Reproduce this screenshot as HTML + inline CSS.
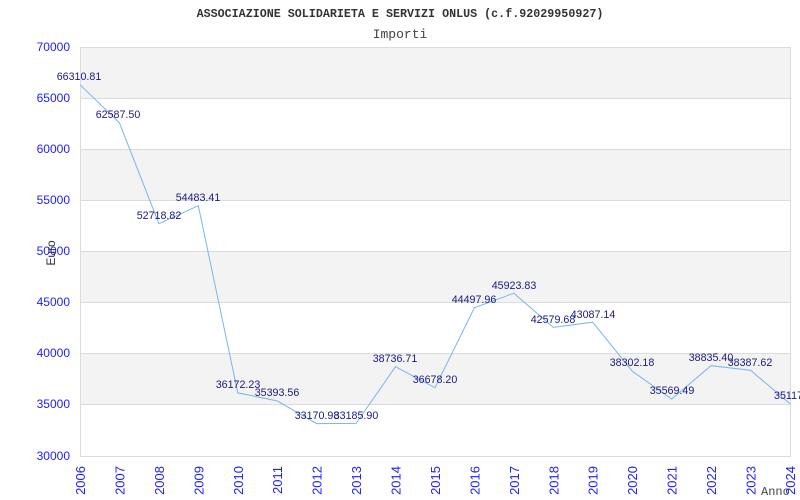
<!DOCTYPE html>
<html><head><meta charset="utf-8"><style>
html,body{margin:0;padding:0;background:#fff;width:800px;height:500px;overflow:hidden}
</style></head><body>
<svg width="800" height="500" xmlns="http://www.w3.org/2000/svg">
<rect x="0" y="0" width="800" height="500" fill="#fff"/>
<g fill="#f3f3f3">
<rect x="80" y="47" width="710" height="51"/>
<rect x="80" y="149" width="710" height="51"/>
<rect x="80" y="251" width="710" height="51"/>
<rect x="80" y="353" width="710" height="51"/>
</g>
<g stroke="#dcdcdc" stroke-width="1">
<line x1="80" y1="47.5" x2="790" y2="47.5"/>
<line x1="80" y1="98.5" x2="790" y2="98.5"/>
<line x1="80" y1="149.5" x2="790" y2="149.5"/>
<line x1="80" y1="200.5" x2="790" y2="200.5"/>
<line x1="80" y1="251.5" x2="790" y2="251.5"/>
<line x1="80" y1="302.5" x2="790" y2="302.5"/>
<line x1="80" y1="353.5" x2="790" y2="353.5"/>
<line x1="80" y1="404.5" x2="790" y2="404.5"/>
<line x1="80" y1="456.5" x2="790" y2="456.5"/>
<line x1="80.5" y1="47" x2="80.5" y2="457"/>
<line x1="790.5" y1="47" x2="790.5" y2="457"/>
</g>
<g font-family="Liberation Mono, monospace" fill="#333" text-anchor="middle">
<text x="400" y="17" font-size="11.7" font-weight="bold">ASSOCIAZIONE SOLIDARIETA E SERVIZI ONLUS (c.f.92029950927)</text>
<text x="400" y="38" font-size="13" fill="#444">Importi</text>
</g>
<g font-family="Liberation Sans, sans-serif" font-size="12" fill="#2020ff" text-anchor="end">
<text x="70" y="51">70000</text><text x="70" y="102">65000</text><text x="70" y="153">60000</text><text x="70" y="204">55000</text><text x="70" y="255">50000</text><text x="70" y="306">45000</text><text x="70" y="357">40000</text><text x="70" y="408">35000</text><text x="70" y="460">30000</text>
</g>
<g font-family="Liberation Sans, sans-serif" font-size="13" fill="#2020ff" text-anchor="end">
<text transform="translate(85,466) rotate(-90)">2006</text>
<text transform="translate(124.4,466) rotate(-90)">2007</text>
<text transform="translate(163.9,466) rotate(-90)">2008</text>
<text transform="translate(203.3,466) rotate(-90)">2009</text>
<text transform="translate(242.8,466) rotate(-90)">2010</text>
<text transform="translate(282.2,466) rotate(-90)">2011</text>
<text transform="translate(321.6,466) rotate(-90)">2012</text>
<text transform="translate(361.1,466) rotate(-90)">2013</text>
<text transform="translate(400.5,466) rotate(-90)">2014</text>
<text transform="translate(440,466) rotate(-90)">2015</text>
<text transform="translate(479.4,466) rotate(-90)">2016</text>
<text transform="translate(518.9,466) rotate(-90)">2017</text>
<text transform="translate(558.3,466) rotate(-90)">2018</text>
<text transform="translate(597.7,466) rotate(-90)">2019</text>
<text transform="translate(637.2,466) rotate(-90)">2020</text>
<text transform="translate(676.6,466) rotate(-90)">2021</text>
<text transform="translate(716.1,466) rotate(-90)">2022</text>
<text transform="translate(755.5,466) rotate(-90)">2023</text>
<text transform="translate(795,466) rotate(-90)">2024</text>
</g>
<text transform="translate(55,253) rotate(-90)" font-family="Liberation Sans, sans-serif" font-size="12" fill="#333" text-anchor="middle">Euro</text>
<text x="761" y="495" font-family="Liberation Mono, monospace" font-size="12" fill="#444">Anno</text>
<polyline fill="none" stroke="#7ab4f0" stroke-width="1" points="80,84.7 119.4,122.8 158.9,223.7 198.3,205.7 237.8,392.9 277.2,400.9 316.6,423.6 356.1,423.4 395.5,366.7 435,387.7 474.4,307.8 513.8,293.2 553.3,327.4 592.7,322.2 632.2,371.1 671.6,399.1 711,365.7 750.5,370.2 790,403.7"/>
<g font-family="Liberation Sans, sans-serif" font-size="10.7" fill="#1a1a80" text-anchor="middle">
<text x="79" y="80">66310.81</text>
<text x="118" y="118">62587.50</text>
<text x="159" y="219">52718.82</text>
<text x="198" y="201">54483.41</text>
<text x="238" y="388">36172.23</text>
<text x="277" y="396">35393.56</text>
<text x="317" y="419">33170.98</text>
<text x="356" y="419">33185.90</text>
<text x="395" y="362">38736.71</text>
<text x="435" y="383">36678.20</text>
<text x="474" y="303">44497.96</text>
<text x="514" y="289">45923.83</text>
<text x="553" y="323">42579.68</text>
<text x="593" y="318">43087.14</text>
<text x="632" y="366">38302.18</text>
<text x="672" y="394">35569.49</text>
<text x="711" y="361">38835.40</text>
<text x="750" y="366">38387.62</text>
<text x="790" y="399">35117.</text>
</g>
</svg>
</body></html>
